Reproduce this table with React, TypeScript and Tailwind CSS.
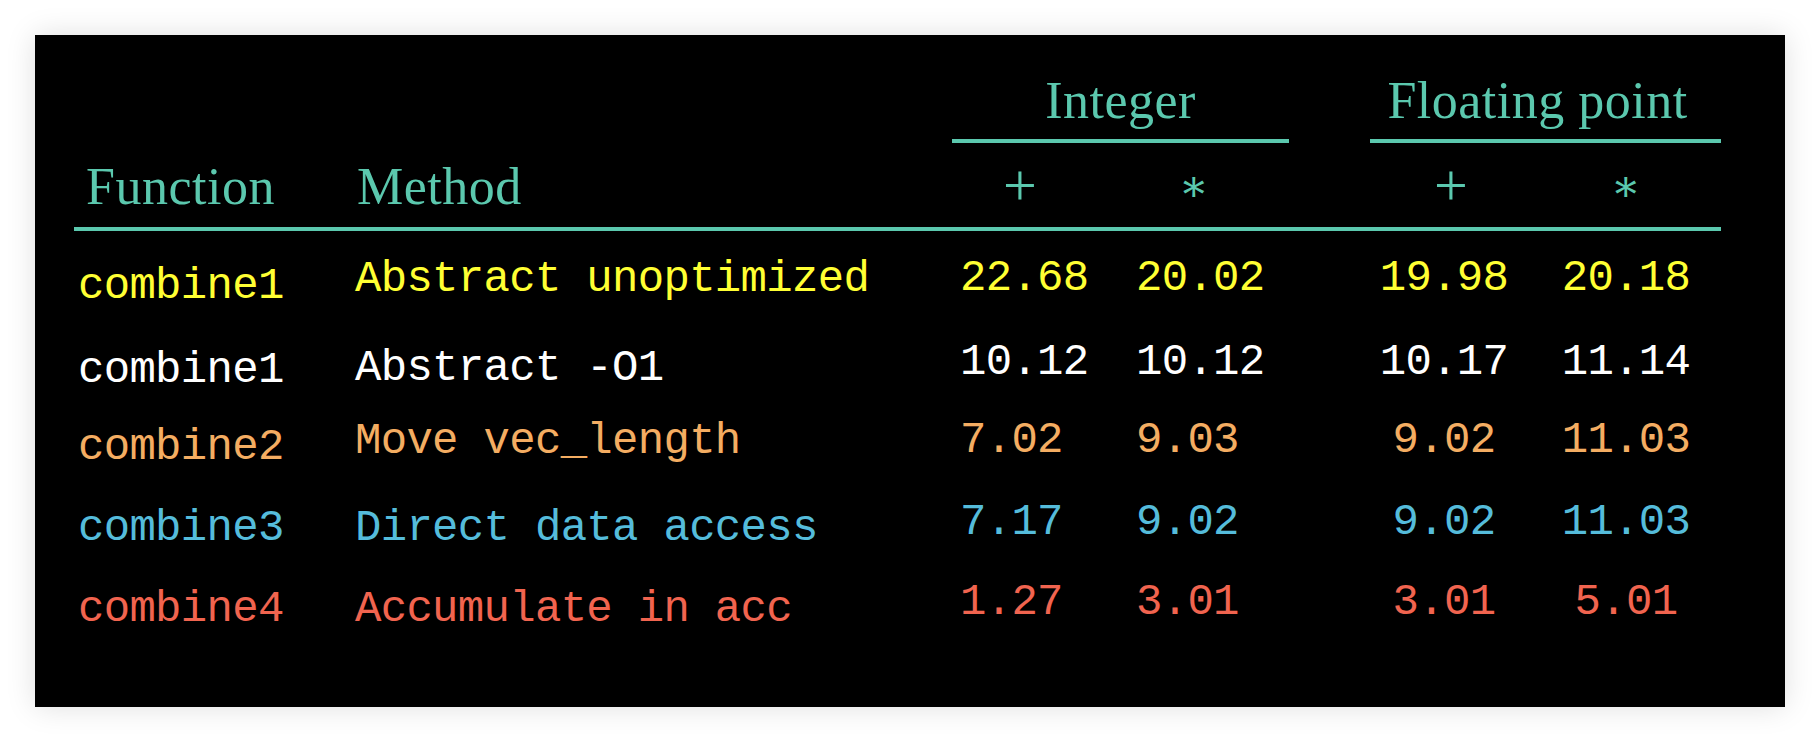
const rows = [
  {
    fn: "combine1",
    method: "Abstract unoptimized",
    vals: ["22.68", "20.02", "19.98", "20.18"],
    color: "text-[#ffff33]",
    fnPad: "pt-[8px]",
    methodPad: "pt-[1px]",
    numPad: "pt-0",
  },
  {
    fn: "combine1",
    method: "Abstract -O1",
    vals: ["10.12", "10.12", "10.17", "11.14"],
    color: "text-white",
    fnPad: "pt-[11px]",
    methodPad: "pt-[9px]",
    numPad: "pt-[3px]",
  },
  {
    fn: "combine2",
    method: "Move vec_length",
    vals: ["7.02", "9.03", "9.02", "11.03"],
    color: "text-[#f4ad62]",
    fnPad: "pt-[7px]",
    methodPad: "pt-[1px]",
    numPad: "pt-0",
  },
  {
    fn: "combine3",
    method: "Direct data access",
    vals: ["7.17", "9.02", "9.02", "11.03"],
    color: "text-[#55bcdb]",
    fnPad: "pt-[7px]",
    methodPad: "pt-[7px]",
    numPad: "pt-[1px]",
  },
  {
    fn: "combine4",
    method: "Accumulate in acc",
    vals: ["1.27", "3.01", "3.01", "5.01"],
    color: "text-[#f1644f]",
    fnPad: "pt-[7px]",
    methodPad: "pt-[7px]",
    numPad: "pt-0",
  },
];

const serif = "font-['Liberation_Serif','DejaVu_Serif',serif] text-[52px] leading-[50px] tracking-[0.5px] text-[#5bc8ae]";
const op = "font-['Liberation_Serif','DejaVu_Serif',serif] text-[#5bc8ae] text-center";
const mono = "font-['Liberation_Mono','DejaVu_Sans_Mono',monospace] text-[44px] leading-[48px] tracking-[-0.7px] whitespace-pre";

export default function App() {
  return (
    <div className="w-full h-[743px] bg-white p-[35px]">
      <div className="h-[672px] bg-black shadow-[0_0_28px_rgba(0,0,0,0.13)] pl-[39px] pt-[41px]">
        {/* group headers */}
        <div className="flex">
          <div className="w-[878px]" />
          <div className="w-[337px] border-b-4 border-[#5bc8ae] pb-[13px]">
            <div className={`${serif} text-center`}>Integer</div>
          </div>
          <div className="w-[81px]" />
          <div className="w-[351px] border-b-4 border-[#5bc8ae] pb-[13px]">
            <div className={`${serif} text-center pr-[16px]`}>Floating point</div>
          </div>
        </div>

        {/* column headers */}
        <div className="w-[1647px] flex mt-[19px] pb-[15px] border-b-4 border-[#5bc8ae]">
          <div className={`${serif} w-[271px] pl-[12px]`}>Function</div>
          <div className={`${serif} w-[607px] pl-[12px]`}>Method</div>
          <div className={`${op} w-[136px] text-[60px] leading-[46px]`}>+</div>
          <div className={`${op} w-[212px] text-[44px] leading-[50px]`}>∗</div>
          <div className={`${op} w-[302px] text-[60px] leading-[46px]`}>+</div>
          <div className={`${op} w-[48px] text-[44px] leading-[50px]`}>∗</div>
        </div>

        {/* data */}
        <div className="pt-[23px]">
          {rows.map((r, i) => (
            <div key={i} className={`flex items-start h-[81px] ${mono} ${r.color}`}>
              <div className={`w-[271px] pl-[4px] ${r.fnPad}`}>{r.fn}</div>
              <div className={`w-[607px] pl-[10px] ${r.methodPad}`}>{r.method}</div>
              <div className={`w-[168px] pl-[8px] ${r.numPad}`}>{r.vals[0]}</div>
              <div className={`w-[250px] pl-[16px] ${r.numPad}`}>{r.vals[1]}</div>
              <div className={`w-[148px] flex justify-center ${r.numPad}`}>{r.vals[2]}</div>
              <div className={`w-[216px] flex justify-center ${r.numPad}`}>{r.vals[3]}</div>
            </div>
          ))}
        </div>
      </div>
    </div>
  );
}
